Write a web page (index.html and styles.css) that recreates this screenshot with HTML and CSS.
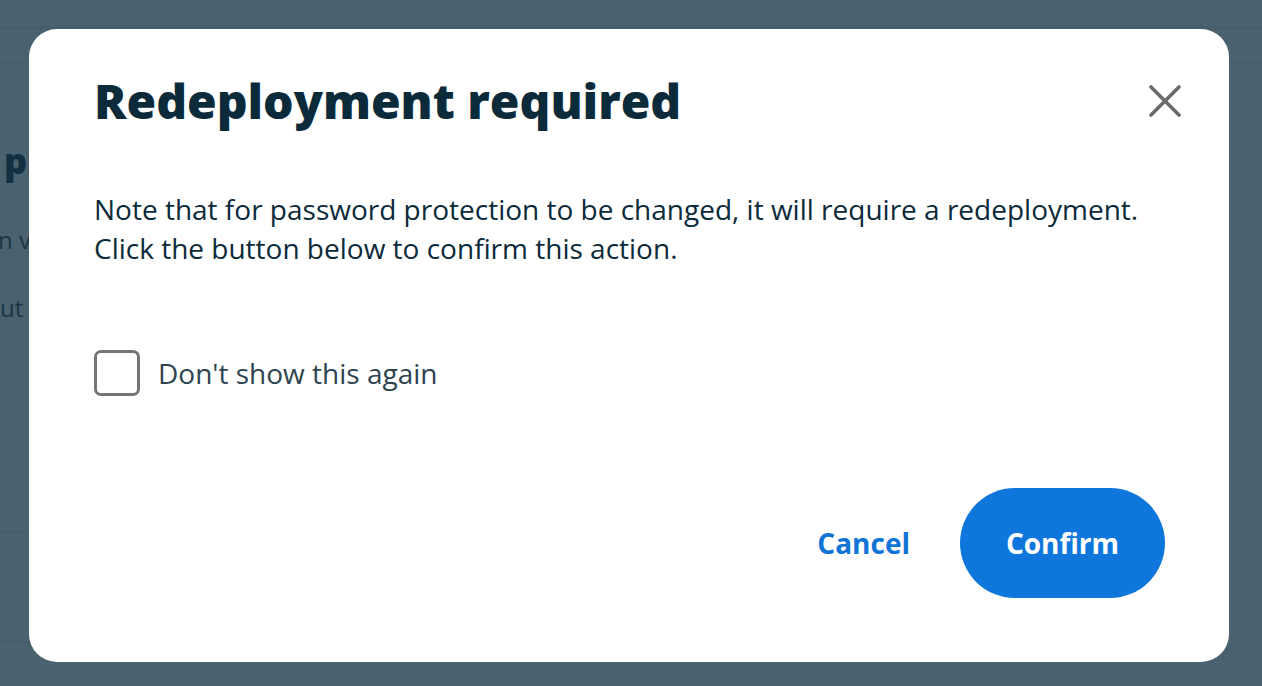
FILE: index.html
```html
<!DOCTYPE html>
<html lang="en">
<head>
<meta charset="utf-8">
<title>Redeployment required</title>
<link rel="stylesheet" href="styles.css">
</head>
<body>
<div class="page">
  <div class="page-topbar"></div>
  <header class="page-header"></header>
  <main class="page-main">
    <h2 class="page-title">p</h2>
    <p class="page-text">n v</p>
    <p class="page-text page-text-2">ut</p>
    <div class="page-divider page-divider-1"></div>
    <div class="page-divider page-divider-2"></div>
  </main>
</div>
<div class="overlay">
  <div class="modal" role="dialog" aria-labelledby="modal-title">
    <div class="modal-head">
      <h1 class="modal-title" id="modal-title">Redeployment required</h1>
      <button class="close-btn" aria-label="Close">
        <svg width="32" height="32" viewBox="0 0 32 32"><path d="M2 2 L30 30 M30 2 L2 30" stroke="#6b6b6b" stroke-width="3.6" stroke-linecap="round" fill="none"/></svg>
      </button>
    </div>
    <p class="modal-text">Note that for password protection to be changed, it will require a redeployment.<br>Click the button below to confirm this action.</p>
    <label class="check-row">
      <span class="checkbox"></span>
      <span class="check-label">Don't show this again</span>
    </label>
    <div class="modal-actions">
      <button class="btn-cancel">Cancel</button>
      <button class="btn-confirm">Confirm</button>
    </div>
  </div>
</div>
</body>
</html>
```

FILE: styles.css
```css
* { box-sizing: border-box; }
html, body { margin: 0; padding: 0; }
body {
  width: 1262px;
  height: 686px;
  overflow: hidden;
  background: #4a6270;
  font-family: "Open Sans", "Noto Sans", sans-serif;
  position: relative;
}
.page { height: 686px; display: flex; flex-direction: column; }
.page-topbar {
  height: 28px;
  border-bottom: 1px solid #435a67;
}
.page-header {
  height: 35px;
  border-bottom: 1px solid #435a67;
}
.page-main { flex: 1; position: relative; padding-left: 4px; }
.page-title {
  margin: 78px 0 0 0;
  font-size: 36px;
  font-weight: 800;
  color: #12303f;
  line-height: 40px;
}
.page-text {
  margin: 43px 0 0 0;
  font-size: 24px;
  color: #1a3544;
  line-height: 32px;
  margin-left: -6px;
}
.page-text-2 { margin-top: 36px; margin-left: -4px; }
.page-divider {
  position: absolute;
  left: 0;
  width: 40px;
  height: 1px;
  background: #435a67;
}
.page-divider-1 { top: 468px; }
.page-divider-2 { top: 578px; }

.overlay {
  position: absolute;
  inset: 0;
}
.modal {
  position: absolute;
  left: 29px;
  top: 29px;
  width: 1200px;
  height: 633px;
  background: #ffffff;
  border-radius: 28px;
  padding: 39px 64px 64px 65px;
  display: flex;
  flex-direction: column;
}
.modal-head {
  display: flex;
  justify-content: space-between;
  align-items: flex-start;
}
.modal-title {
  margin: 0;
  font-size: 48px;
  font-weight: 800;
  line-height: 65px;
  color: #0b2a3a;
}
.close-btn {
  background: none;
  border: none;
  padding: 0;
  margin-top: 17px;
  margin-right: -16px;
  width: 32px;
  height: 32px;
  cursor: pointer;
  display: flex;
}
.modal-text {
  margin: 57px 0 0 0;
  font-size: 28px;
  line-height: 39px;
  color: #0b2a3a;
}
.check-row {
  margin-top: 82px;
  display: flex;
  align-items: center;
  gap: 18px;
}
.checkbox {
  width: 46px;
  height: 46px;
  border: 3px solid #757575;
  border-radius: 7px;
  background: #fff;
}
.check-label {
  font-size: 28px;
  color: #2e4450;
}
.modal-actions {
  margin-top: auto;
  display: flex;
  justify-content: flex-end;
  align-items: center;
  gap: 50px;
}
.btn-cancel {
  background: none;
  border: none;
  padding: 0;
  font-family: inherit;
  font-size: 28px;
  font-weight: 700;
  color: #0f74d6;
  cursor: pointer;
}
.btn-confirm {
  width: 205px;
  height: 110px;
  border: none;
  border-radius: 55px;
  background: #0f77dc;
  color: #ffffff;
  font-family: inherit;
  font-size: 28px;
  font-weight: 700;
  cursor: pointer;
}
```
